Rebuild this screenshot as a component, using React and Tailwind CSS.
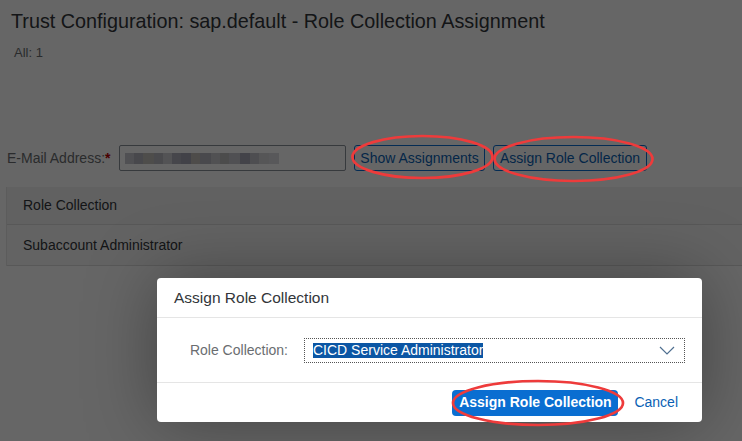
import React from "react";

const blocks = [
  ["#c9c9cf", 9], ["#b4b4be", 9], ["#c4c0bc", 11], ["#b8b8c0", 9], ["#cfcfd4", 9], ["#b0b0bc", 9],
  ["#a6a6b4", 10], ["#c2bfba", 9], ["#b6b6c0", 11], ["#cacad0", 9], ["#bebebe", 9], ["#c8c8d0", 11],
  ["#a8a8b6", 10], ["#c4c4ca", 9], ["#d6d6da", 10], ["#dcdce0", 10],
];

export default function App() {
  return (
    <div className="relative w-[742px] h-[441px] overflow-hidden bg-white font-['Liberation_Sans',Arial,sans-serif]">
      {/* Page */}
      <div className="flex flex-col">
        <div className="pt-[9px] pl-[11px] text-[19.8px] leading-[24px] text-[#32363a] whitespace-nowrap">
          Trust Configuration: sap.default - Role Collection Assignment
        </div>
        <div className="mt-[12px] pl-[14px] text-[13px] leading-[16px] text-[#6a6d70]">All: 1</div>
        <div className="mt-[84px] flex items-center h-[26px] pl-[7px]">
          <div className="w-[112px] text-[14px] text-[#6a6d70] whitespace-nowrap">
            E-Mail Address:<span className="text-[#bb0000] font-bold">*</span>
          </div>
          <div className="w-[227px] h-[26px] border border-[#89919a] rounded-[2px] bg-white flex items-center pl-[5px]">
            <div className="flex h-[11px]">
              {blocks.map(([c, w], i) => (
                <div key={i} style={{ background: c, width: w }} className="h-full" />
              ))}
            </div>
          </div>
          <div className="ml-[8px] w-[131px] h-[26px] border border-[#0a6ed1] rounded-[3px] flex items-center justify-center text-[14px] text-[#0a5fb4] whitespace-nowrap">
            Show Assignments
          </div>
          <div className="ml-[8px] w-[154px] h-[26px] border border-[#0a6ed1] rounded-[3px] flex items-center justify-center text-[14px] text-[#0a5fb4] whitespace-nowrap">
            Assign Role Collection
          </div>
        </div>
        <div className="mt-[16px] ml-[6px] border-l border-[#e5e5e5]">
          <div className="h-[38px] bg-[#f3f3f3] border-b border-[#dcdcdc] flex items-center pl-[16px] text-[14px] text-[#32363a]">
            Role Collection
          </div>
          <div className="h-[41px] bg-[#f8f8f8] border-b border-[#dcdcdc] flex items-center pl-[16px] text-[14px] text-[#32363a]">
            Subaccount Administrator
          </div>
        </div>
      </div>

      {/* Modal overlay */}
      <div className="absolute inset-0 bg-black/60" />

      {/* Dialog */}
      <div className="absolute left-[157px] top-[278px] w-[545px] h-[144px] bg-white rounded-[4px] shadow-[0_0_70px_rgba(0,0,0,0.35)] flex flex-col">
        <div className="h-[40px] border-b border-[#e5e5e5] flex items-center pl-[17px] text-[15.5px] text-[#32363a]">
          Assign Role Collection
        </div>
        <div className="h-[64px] flex items-center pl-[20px]">
          <div className="w-[111px] text-right text-[14px] text-[#6a6d70] whitespace-nowrap">Role Collection:</div>
          <div className="ml-[16px] w-[381px] h-[25px] border border-dotted border-[#555] flex items-center pl-[8px] pr-[9px]">
            <span className="bg-[#0b56a4] text-white text-[14px] leading-[15px] whitespace-nowrap">
              CICD Service Administrator
            </span>
            <svg className="ml-auto" width="16" height="9" viewBox="0 0 16 9">
              <polyline points="1,1 8,8 15,1" fill="none" stroke="#4f6f90" strokeWidth="1.2" />
            </svg>
          </div>
        </div>
        <div className="flex-1 border-t border-[#e5e5e5] flex items-center justify-end pr-[24px]">
          <div className="w-[166px] h-[26px] bg-[#0a6ed1] rounded-[4px] flex items-center justify-center text-white text-[14px] font-bold whitespace-nowrap">
            Assign Role Collection
          </div>
          <div className="ml-[16px] text-[14px] text-[#0a5fb4]">Cancel</div>
        </div>
      </div>

      {/* Annotations */}
      <svg className="absolute inset-0 pointer-events-none" width="742" height="441">
        <ellipse cx="422.5" cy="157" rx="70" ry="21" fill="none" stroke="#ee3b3b" strokeWidth="2.7" />
        <ellipse cx="573.5" cy="159" rx="79" ry="22" fill="none" stroke="#ee3b3b" strokeWidth="2.7" />
        <ellipse cx="538" cy="403" rx="85" ry="22" fill="none" stroke="#ee3b3b" strokeWidth="2.7" />
      </svg>
    </div>
  );
}
